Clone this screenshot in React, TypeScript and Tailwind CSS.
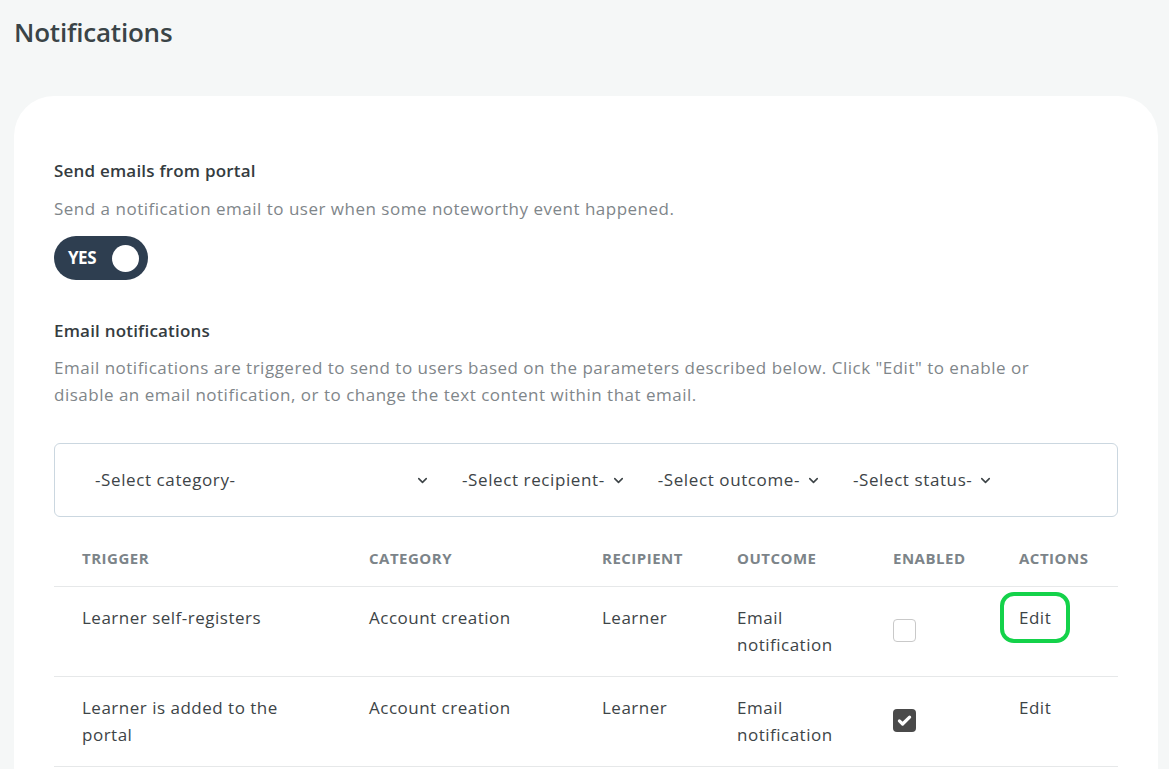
import { ChevronDown } from "lucide-react";

const FILTERS = [
  { label: "-Select category-", wide: true },
  { label: "-Select recipient-", wide: false },
  { label: "-Select outcome-", wide: false },
  { label: "-Select status-", wide: false },
];

const ROWS = [
  { trigger: "Learner self-registers", category: "Account creation", recipient: "Learner", outcome: "Email notification", enabled: false, focused: true },
  { trigger: "Learner is added to the portal", category: "Account creation", recipient: "Learner", outcome: "Email notification", enabled: true, focused: false },
];

const GRID = "grid grid-cols-[287px_233px_135px_156px_126px_1fr]";

function Checkbox({ checked }: { checked: boolean }) {
  if (checked) {
    return (
      <span className="flex h-[23px] w-[23px] items-center justify-center rounded-[4px] bg-[#4a4a4a]">
        <svg viewBox="0 0 16 16" className="h-[17px] w-[17px]" fill="none" stroke="white" strokeWidth="3" strokeLinecap="round" strokeLinejoin="round">
          <path d="M3.2 8.4l3 2.9L12.8 4.9" />
        </svg>
      </span>
    );
  }
  return <span className="block h-[23px] w-[23px] rounded-[4px] border border-[#c9c9c9] bg-white" />;
}

export default function App() {
  return (
    <div className="min-h-screen bg-[#f5f7f7] pl-[14px] pr-[11px] font-['Open_Sans',sans-serif] text-[#3d4447]">
      <h1 className="pt-[12px] text-[26px] font-semibold leading-[40px] tracking-[-0.2px] text-[#3a4447]">Notifications</h1>

      <div className="mt-[44px] rounded-t-[40px] bg-white px-[40px] pt-[60px] pb-[20px] tracking-[0.5px]">
        <h2 className="text-[17px] font-semibold leading-[30px] tracking-[0.2px] text-[#353c3f]">Send emails from portal</h2>
        <p className="mt-[9px] text-[17px] leading-[27px] text-[#7f868a]">
          Send a notification email to user when some noteworthy event happened.
        </p>
        <button className="mt-[14px] flex h-[44px] w-[94px] items-center rounded-full bg-[#2e3e50] pl-[14px] pr-[9px]">
          <span className="text-[17px] font-bold tracking-[-0.5px] text-white">YES</span>
          <span className="ml-auto h-[27px] w-[27px] rounded-full bg-white" />
        </button>

        <h2 className="mt-[36px] text-[17px] font-semibold leading-[30px] tracking-[0.2px] text-[#353c3f]">Email notifications</h2>
        <p className="mt-[8px] max-w-[1000px] text-[17px] leading-[27px] text-[#7f868a]">
          Email notifications are triggered to send to users based on the parameters described below. Click "Edit" to enable or
          disable an email notification, or to change the text content within that email.
        </p>

        <div className="mt-[35px] flex h-[74px] items-center gap-[32px] rounded-[6px] border border-[#cbd7e0] pl-[40px]">
          {FILTERS.map((f) => (
            <div
              key={f.label}
              className={`flex items-center text-[17px] tracking-[0.6px] text-[#3d4447] ${f.wide ? "w-[335px]" : ""}`}
            >
              <span>{f.label}</span>
              <ChevronDown className={`h-[15px] w-[15px] ${f.wide ? "ml-auto" : "ml-[6px]"}`} strokeWidth={2.5} />
            </div>
          ))}
        </div>

        <div className="mt-[14px]">
          <div className={`${GRID} h-[56px] items-center border-b border-[#e6e8e9] pl-[28px] text-[15px] font-bold uppercase text-[#7c8489]`}>
            <span>Trigger</span>
            <span>Category</span>
            <span>Recipient</span>
            <span>Outcome</span>
            <span>Enabled</span>
            <span>Actions</span>
          </div>
          {ROWS.map((r) => (
            <div key={r.trigger} className={`${GRID} h-[90px] border-b border-[#e6e8e9] pl-[28px] pt-[17px] text-[17px] leading-[27px]`}>
              <span className="pr-[50px]">{r.trigger}</span>
              <span>{r.category}</span>
              <span>{r.recipient}</span>
              <span className="pr-[20px]">{r.outcome}</span>
              <span className="pt-[15px]">
                <Checkbox checked={r.enabled} />
              </span>
              <span>
                <button
                  className={`-mt-[27px] -ml-[19px] rounded-[14px] border-[4px] px-[15px] py-[8px] tracking-[0.5px] ${r.focused ? "border-[#14d24a]" : "border-transparent"}`}
                >
                  Edit
                </button>
              </span>
            </div>
          ))}
        </div>
      </div>
    </div>
  );
}
